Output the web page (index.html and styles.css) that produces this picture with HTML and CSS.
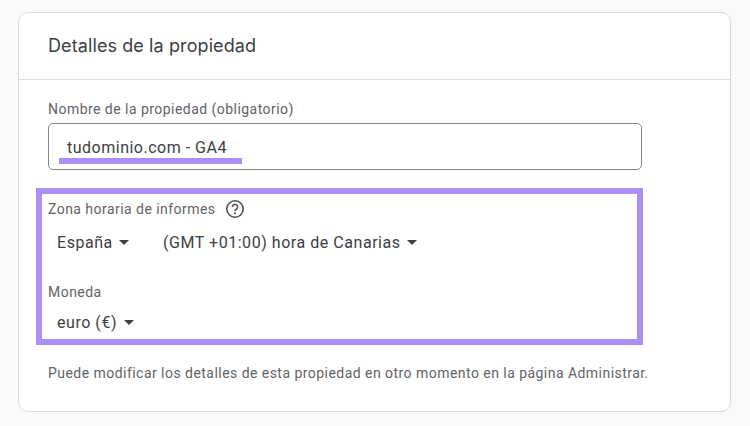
FILE: index.html
```html
<!DOCTYPE html>
<html lang="es">
<head>
<meta charset="UTF-8" />
<meta name="viewport" content="width=device-width, initial-scale=1" />
<title>Detalles de la propiedad</title>
<link rel="stylesheet" href="styles.css">
</head>
<body>

<div class="card">
  <div class="card-head">Detalles de la propiedad</div>
  <div class="card-body">
    <div class="field-label name-label">Nombre de la propiedad (obligatorio)</div>
    <div class="name-input">
      <span>tudominio.com - GA4</span>
      <div class="underline"></div>
    </div>

    <div class="highlight">
      <div class="field-label zone-label">
        Zona horaria de informes
        <svg class="help" width="20" height="20" viewBox="0 0 20 20">
          <circle cx="10" cy="10" r="8.2" fill="none" stroke="#4d5156" stroke-width="1.6"/>
          <path d="M7.4 8a2.6 2.6 0 1 1 4.2 2c-.9.7-1.6 1.1-1.6 2.3" fill="none" stroke="#4d5156" stroke-width="1.6"/>
          <rect x="9.1" y="13.4" width="1.8" height="1.8" fill="#4d5156"/>
        </svg>
      </div>
      <div class="select-row">
        <div class="select country">España <i class="caret"></i></div>
        <div class="select">(GMT +01:00) hora de Canarias <i class="caret"></i></div>
      </div>
      <div class="field-label currency-label">Moneda</div>
      <div class="select-row">
        <div class="select">euro (€) <i class="caret"></i></div>
      </div>
    </div>

    <p class="note">Puede modificar los detalles de esta propiedad en otro momento en la página Administrar.</p>
  </div>
</div>

</body>
</html>
```

FILE: styles.css
```css
body { margin: 0; background: #f8f9fa; font-family: Roboto, "Liberation Sans", sans-serif; color: #3c4043; padding: 12px 19px 15px 18px; }
.card { background: #fff; border: 1px solid #dadce0; border-radius: 10px; height: 400px; box-sizing: border-box; }
.card-head { height: 66px; padding-left: 29px; border-bottom: 1px solid #dadce0; font-family: Inter, Roboto, sans-serif; font-size: 18px; line-height: 65px; letter-spacing: 0.1px; color: #3c4043; }
.card-body { padding: 19px 0 0 17px; }
.field-label { font-size: 14px; line-height: 20px; letter-spacing: 0.46px; color: #5f6368; }
.name-label { margin-left: 12px; }
.name-input { position: relative; box-sizing: border-box; width: 594px; height: 47px; margin: 4px 0 0 12px; padding: 0 0 0 18px; border: 1px solid #80868b; border-radius: 5px; font-size: 16px; line-height: 47px; letter-spacing: 0.5px; color: #3c4043; }
.underline { position: absolute; left: 10px; top: 34px; width: 183px; height: 6px; background: #ab8ff7; }
.highlight { box-sizing: border-box; width: 607px; height: 157px; margin-top: 18px; padding: 5px 0 0 6px; border: 6px solid #ab8ff7; }
.zone-label { display: flex; align-items: center; gap: 9px; }
.select-row { display: flex; margin-top: 12px; padding-left: 9px; }
.select { font-size: 16px; line-height: 24px; letter-spacing: 0.54px; color: #3c4043; }
.country { width: 106px; }
.caret { display: inline-block; width: 0; height: 0; margin: 0 0 3px 2px; border: 5px solid transparent; border-top-color: #3c4043; border-bottom: 0; }
.currency-label { margin-top: 27px; }
.currency-label + .select-row { margin-top: 9px; }
.note { margin: 18px 0 0 12px; font-size: 14px; line-height: 20px; letter-spacing: 0.46px; color: #5f6368; }
```
